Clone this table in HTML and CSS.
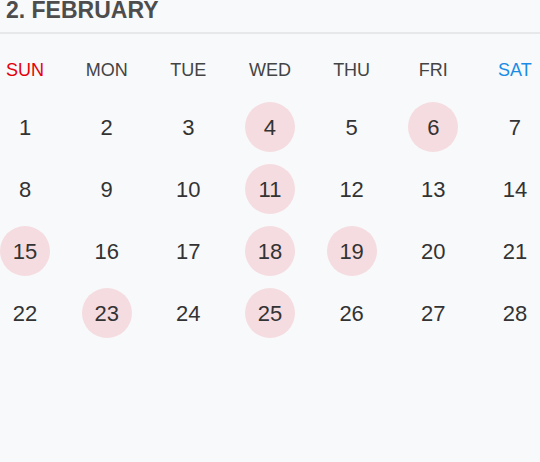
FILE: index.html
```html
<!DOCTYPE html>
<html>
<head>
<meta charset="utf-8">
<link rel="stylesheet" href="styles.css">
</head>
<body>
<div class="cal">
  <div class="title">2. FEBRUARY</div>
  <div class="grid week">
    <div class="dow sun">SUN</div>
    <div class="dow">MON</div>
    <div class="dow">TUE</div>
    <div class="dow">WED</div>
    <div class="dow">THU</div>
    <div class="dow">FRI</div>
    <div class="dow sat">SAT</div>
  </div>
  <div class="grid days">
    <div class="day">1</div><div class="day">2</div><div class="day">3</div><div class="day mark">4</div><div class="day">5</div><div class="day mark">6</div><div class="day">7</div>
    <div class="day">8</div><div class="day">9</div><div class="day">10</div><div class="day mark">11</div><div class="day">12</div><div class="day">13</div><div class="day">14</div>
    <div class="day mark">15</div><div class="day">16</div><div class="day">17</div><div class="day mark">18</div><div class="day mark">19</div><div class="day">20</div><div class="day">21</div>
    <div class="day">22</div><div class="day mark">23</div><div class="day">24</div><div class="day mark">25</div><div class="day">26</div><div class="day">27</div><div class="day">28</div>
  </div>
</div>
</body>
</html>
```
FILE: styles.css
```css
html, body {
  margin: 0;
  padding: 0;
  background: #f8f9fb;
  font-family: "Liberation Sans", Arial, sans-serif;
}
.cal {
  width: 540px;
}
.title {
  font-size: 23px;
  font-weight: bold;
  line-height: 20px;
  height: 20px;
  color: #4d4d4d;
  padding: 0 0 12px 6px;
  border-bottom: 2px solid #e7e8ea;
}
.grid {
  display: grid;
  grid-template-columns: repeat(7, 50px);
  justify-content: space-between;
}
.week {
  margin-top: 26px;
}
.dow {
  font-size: 18px;
  line-height: 20px;
  height: 20px;
  text-align: center;
  color: #444;
}
.dow.sun { color: #e5000a; }
.dow.sat { color: #1a8ce6; }
.days {
  margin-top: 22px;
  row-gap: 12px;
}
.day {
  width: 50px;
  height: 50px;
  border-radius: 50%;
  box-sizing: border-box;
  padding-top: 1px;
  font-size: 22px;
  line-height: 50px;
  text-align: center;
  color: #333;
}
.day.mark {
  background: #f5dce0;
}
```
